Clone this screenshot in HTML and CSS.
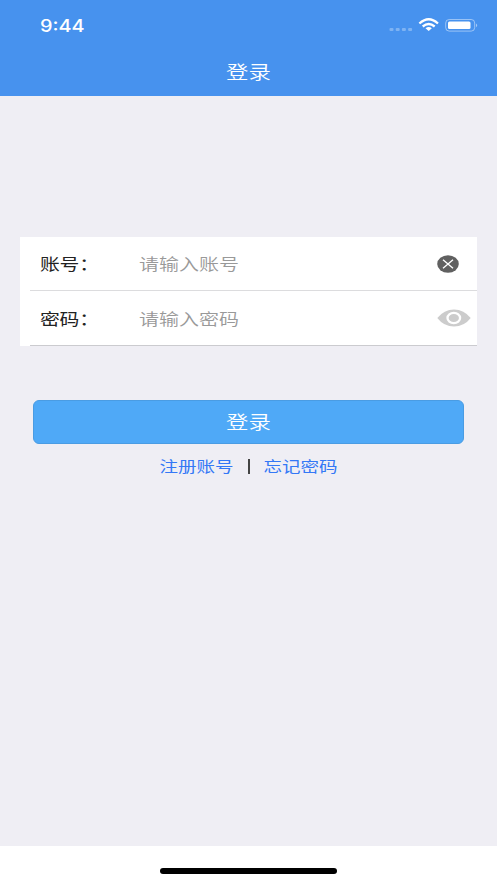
FILE: index.html
```
<!DOCTYPE html>
<html lang="zh-CN">
<head>
<meta charset="utf-8">
<title>登录</title>
<link rel="stylesheet" href="styles.css">
</head>
<body>
<div class="screen">
  <header class="header">
    <div class="status">
      <span class="time">9:44</span>
      <svg class="status-icons" width="91" height="16" viewBox="0 0 91 16">
        <g fill="#fff" fill-opacity=".3">
          <rect x="2.500" y="11" width="4" height="3" rx="1"/>
          <rect x="8.700" y="11" width="4" height="3" rx="1"/>
          <rect x="14.900" y="11" width="4" height="3" rx="1"/>
          <rect x="21.100" y="11" width="4" height="3" rx="1"/>
        </g>
        <g fill="none" stroke="#fff" stroke-width="2.300">
          <path d="M32.400 6.500Q41.700-2 51 6.500"/>
          <path d="M35.700 9.500Q41.700 4.500 47.700 9.500"/>
        </g>
        <path d="M38.500 11.200Q41.700 8.700 44.900 11.200L41.700 14Z" fill="#fff"/>
        <rect x="58.700" y="2.500" width="29" height="11.600" rx="3.500" fill="none" stroke="#fff" stroke-opacity=".45"/>
        <rect x="61" y="4.500" width="22.500" height="7.600" rx="1.500" fill="#fff"/>
        <path d="M89 6.500Q91.500 8.300 89 10.200Z" fill="#fff" fill-opacity=".5"/>
      </svg>
    </div>
    <h1 class="title"><span class="wide">登录</span></h1>
  </header>
  <main class="main">
    <form class="fields">
      <div class="field">
        <label class="label"><span class="wide">账号：</span></label>
        <span class="placeholder"><span class="wide">请输入账号</span></span>
        <svg class="clear" width="22" height="18" viewBox="0 0 22 18">
          <ellipse cx="11" cy="9" rx="10.800" ry="8.800" fill="#606060"/>
          <path d="M6 4.700L16 13.300M16 4.700L6 13.300" stroke="#fff" stroke-width="1.300"/>
        </svg>
      </div>
      <div class="field">
        <label class="label"><span class="wide">密码：</span></label>
        <span class="placeholder"><span class="wide">请输入密码</span></span>
        <svg class="eye" width="34" height="18" viewBox="0 0 34 18">
          <path d="M.3 9Q7 .4 17 .4T33.700 9Q27 17.600 17 17.600T.3 9Z" fill="#ccc"/>
          <ellipse cx="16.800" cy="9" rx="6.300" ry="5.200" fill="none" stroke="#fff" stroke-width="2.300"/>
        </svg>
      </div>
    </form>
    <button class="submit" type="button"><span class="wide">登录</span></button>
    <nav class="links">
      <a class="link"><span class="wide">注册账号</span></a>
      <span class="divider"></span>
      <a class="link"><span class="wide">忘记密码</span></a>
    </nav>
  </main>
  <footer class="footer"><div class="home-bar"></div></footer>
</div>
</body>
</html>
```
FILE: styles.css
```
* { box-sizing: border-box; }
body {
  margin: 0;
  font-family: "Noto Sans CJK SC", sans-serif;
  font-weight: 400;
}
.screen {
  display: flex;
  flex-direction: column;
  width: 497px;
  height: 883px;
  background: #efeef4;
  overflow: hidden;
}
.wide {
  display: inline-block;
  white-space: nowrap;
  transform: scaleX(1.21);
}
.header {
  height: 96px;
  background: #4792ee;
  color: #fff;
}
.status {
  display: flex;
  align-items: center;
  justify-content: space-between;
  height: 50px;
  padding: 0 19px 0 40px;
}
.time {
  padding-top: 2px;
  font: 500 17px/20px Inter, sans-serif;
  transform: scaleX(1.17);
  transform-origin: left;
}
.status-icons { overflow: visible; }
.title {
  margin: 0;
  font-size: 18.500px;
  font-weight: 350;
  line-height: 43px;
  text-align: center;
}
.main {
  flex: 1;
  padding: 141px 20px 0;
}
.fields {
  width: 457px;
  height: 109px;
  background: #fff;
}
.field {
  display: flex;
  align-items: center;
  height: 54px;
  margin-left: 10px;
  padding-left: 10px;
  border-bottom: 1px solid #dcdcde;
  font-size: 16.400px;
}
.field:last-child {
  height: 55px;
  border-color: #cbcbcf;
}
.label {
  width: 99px;
  padding-bottom: 1px;
  color: #222;
}
.label .wide { letter-spacing: -.2px; }
.placeholder {
  flex: 1;
  padding-bottom: 1px;
  color: #999;
  font-weight: 350;
}
.placeholder .wide { transform: scaleX(1.22); }
.field .wide { transform-origin: left; }
.clear { margin-right: 18px; }
.eye { margin-right: 6px; }
.submit {
  display: block;
  width: 431px;
  height: 44px;
  margin: 54px 0 0 13px;
  padding: 0 0 1px;
  border: 1px solid #4a9ce3;
  border-radius: 6px;
  background: #4fa9f7;
  color: #fff;
  font: 350 18.500px/39px "Noto Sans CJK SC", sans-serif;
}
.links {
  display: flex;
  align-items: center;
  justify-content: center;
  height: 45px;
}
.link {
  width: 74px;
  padding-bottom: 3px;
  color: #3478f6;
  font-size: 15.300px;
  text-align: center;
}
.divider {
  width: 2px;
  height: 15px;
  margin: 0 14px;
  background: #444;
}
.footer {
  height: 37px;
  padding-top: 22px;
  background: #fff;
}
.home-bar {
  width: 177px;
  height: 6px;
  margin: 0 auto;
  border-radius: 3px;
  background: #000;
}
```
